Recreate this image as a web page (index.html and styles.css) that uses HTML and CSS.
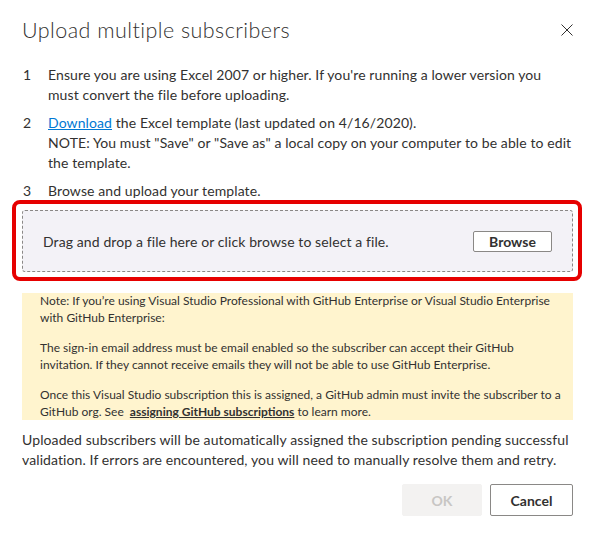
FILE: index.html
```html
<!DOCTYPE html>
<html lang="en">
<head>
    <meta charset="UTF-8">
    <meta name="viewport" content="width=device-width, initial-scale=1.0">
    <title>Upload multiple subscribers</title>
    <link rel="stylesheet" href="styles.css">
</head>
<body>
    <div class="dialog">
        <div class="dialog-header">
            <h1>Upload multiple subscribers</h1>
            <button class="close-btn" aria-label="Close">
                <svg viewBox="0 0 12 12" xmlns="http://www.w3.org/2000/svg">
                    <path d="M0.5 0.5l11 11M11.5 0.5l-11 11"/>
                </svg>
            </button>
        </div>

        <ol class="steps">
            <li>
                <span class="step-num">1</span>
                <span class="step-text">Ensure you are using Excel 2007 or higher. If you're running a lower version you must convert the file before uploading.</span>
            </li>
            <li>
                <span class="step-num">2</span>
                <span class="step-text"><a href="#">Download</a> the Excel template (last updated on 4/16/2020).<br>NOTE: You must "Save" or "Save as" a local copy on your computer to be able to edit the template.</span>
            </li>
            <li>
                <span class="step-num">3</span>
                <span class="step-text">Browse and upload your template.</span>
            </li>
        </ol>

        <div class="dropzone">
            <span>Drag and drop a file here or click browse to select a file.</span>
            <button class="browse-btn">Browse</button>
            <div class="highlight"></div>
        </div>

        <div class="note">
            <p>Note: If you’re using Visual Studio Professional with GitHub Enterprise or Visual Studio Enterprise with GitHub Enterprise:</p>
            <p>The sign-in email address must be email enabled so the subscriber can accept their GitHub invitation. If they cannot receive emails they will not be able to use GitHub Enterprise.</p>
            <p>Once this Visual Studio subscription this is assigned, a GitHub admin must invite the subscriber to a<br>GitHub org. See <a href="#">assigning GitHub subscriptions</a> to learn more.</p>
        </div>

        <p class="summary">Uploaded subscribers will be automatically assigned the subscription pending successful validation. If errors are encountered, you will need to manually resolve them and retry.</p>

        <div class="actions">
            <button class="btn btn-ok" disabled>OK</button>
            <button class="btn">Cancel</button>
        </div>
    </div>
</body>
</html>
```

FILE: styles.css
```css
body {
    margin: 0;
    background: #ffffff;
    font-family: 'Lato', 'Open Sans', sans-serif;
    font-size: 14px;
    letter-spacing: 0.1px;
    color: #323130;
}
.dialog {
    width: 551px;
    padding: 16px 19px 20px 22px;
}
.dialog-header {
    display: flex;
    justify-content: space-between;
    align-items: center;
}
h1 {
    margin: 0;
    font-size: 21.5px;
    font-weight: 300;
    line-height: 28px;
    letter-spacing: 0.45px;
}
.close-btn {
    width: 12px;
    height: 12px;
    padding: 0;
    border: none;
    background: none;
    cursor: pointer;
}
.close-btn svg {
    display: block;
    width: 12px;
    height: 12px;
    stroke: #323130;
    stroke-width: 1;
}
.steps {
    list-style: none;
    margin: 21px 0 0;
    padding: 0;
}
.steps li {
    display: flex;
    line-height: 20px;
    margin-bottom: 8px;
}
.step-num {
    width: 25px;
    flex-shrink: 0;
    padding-left: 1px;
}
.step-text a {
    color: #0078d4;
}
.dropzone {
    position: relative;
    display: flex;
    justify-content: space-between;
    align-items: center;
    height: 60px;
    margin-top: 9px;
    padding: 0 20px;
    background: #f3f2f7;
    border: 1px dashed #8a8886;
    border-radius: 3px;
}
.browse-btn {
    width: 79px;
    height: 21px;
    padding: 0;
    background: #ffffff;
    border: 1px solid #8a8886;
    border-radius: 2px;
    font-family: inherit;
    font-size: 14px;
    font-weight: 700;
    color: #323130;
    cursor: pointer;
}
.highlight {
    position: absolute;
    top: -11px;
    left: -11px;
    right: -10px;
    bottom: -10px;
    border: 4px solid #e60000;
    border-radius: 8px;
    pointer-events: none;
}
.note {
    margin-top: 21px;
    padding: 0 8px 0 18px;
    background: #fff4ce;
    font-size: 12px;
    line-height: 16.5px;
    letter-spacing: 0;
}
.note p {
    margin: 0 0 14px;
}
.note p:last-child {
    margin-bottom: 0;
}
.note a {
    margin-left: 3px;
    color: #323130;
    font-weight: 700;
}
.summary {
    margin: 10px 0 0;
    line-height: 20px;
}
.actions {
    display: flex;
    justify-content: flex-end;
    gap: 8px;
    margin-top: 14px;
}
.btn {
    height: 32px;
    min-width: 83px;
    padding: 0 16px;
    background: #ffffff;
    border: 1px solid #8a8886;
    border-radius: 2px;
    font-family: inherit;
    font-size: 14px;
    font-weight: 700;
    color: #323130;
    cursor: pointer;
}
.btn-ok {
    min-width: 80px;
    background: #f3f2f1;
    border-color: #f3f2f1;
    color: #c8c6c4;
    cursor: default;
}
```
